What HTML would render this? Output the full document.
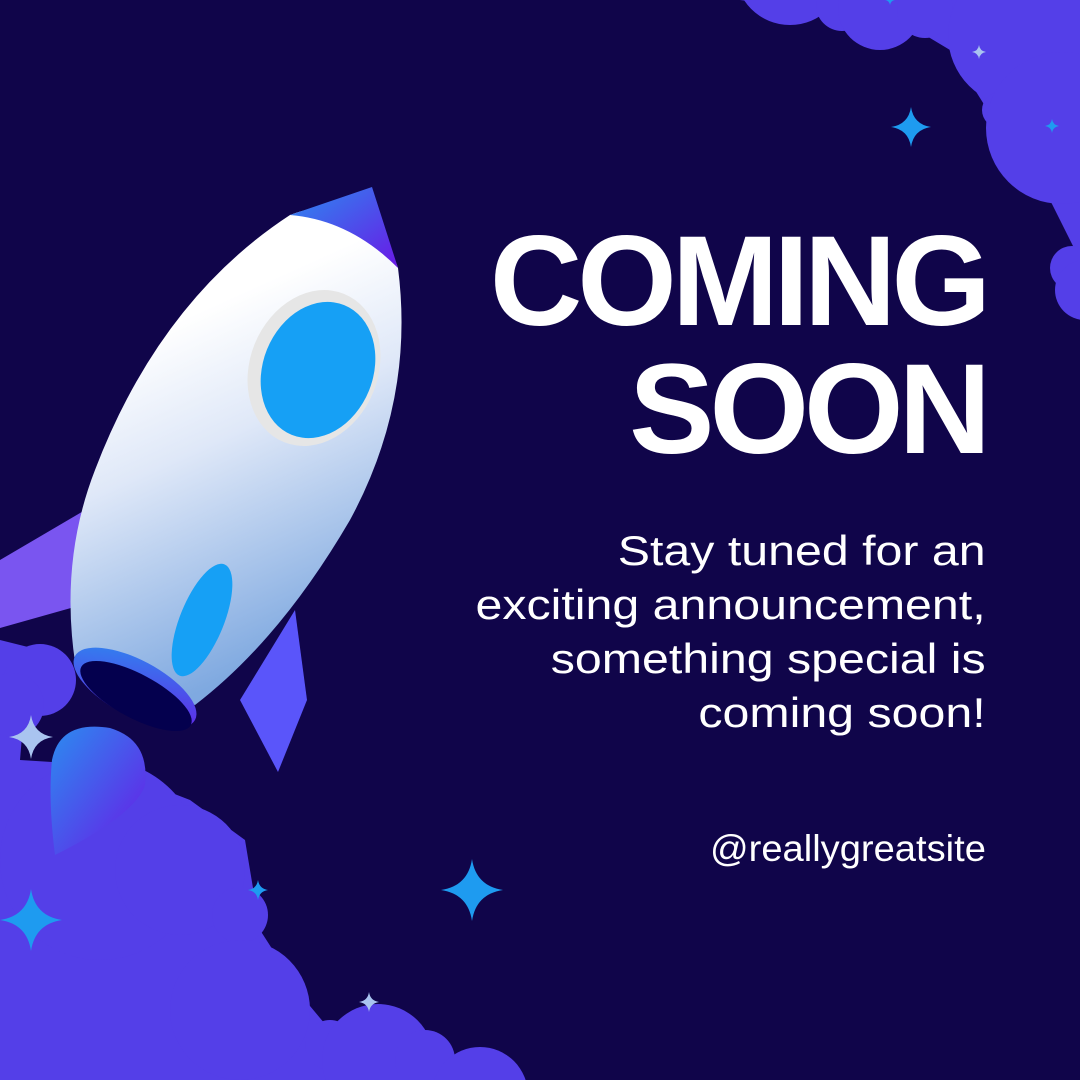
<!DOCTYPE html>
<html><head><meta charset="utf-8"><style>
html,body{margin:0;padding:0;background:#10054a;width:1080px;height:1080px;overflow:hidden;}
.w{position:relative;width:1080px;height:1080px;overflow:hidden;background:#10054a;}
svg{position:absolute;left:0;top:0;}
.t{position:absolute;right:94px;text-align:right;color:#fff;font-family:"Liberation Sans",sans-serif;white-space:nowrap;}
.h{font-weight:bold;font-size:128px;line-height:128px;letter-spacing:-5px;}
.p{font-size:42px;line-height:54px;transform:scaleX(1.15);transform-origin:right top;}
</style></head><body><div class="w">
<svg width="1080" height="1080" viewBox="0 0 1080 1080">
<defs>
<linearGradient id="bd" x1="0" y1="0" x2="0.3" y2="1"><stop offset="0.3" stop-color="#ffffff"/><stop offset="0.55" stop-color="#dfe8f8"/><stop offset="1" stop-color="#7fa9e0"/></linearGradient>
<linearGradient id="pb" x1="0" y1="0" x2="1" y2="1"><stop offset="0" stop-color="#2b8cf0"/><stop offset="1" stop-color="#6a18e6"/></linearGradient>
<path id="s" d="M0,-1 Q0.13,-0.13 1,0 Q0.13,0.13 0,1 Q-0.13,0.13 -1,0 Q-0.13,-0.13 0,-1Z"/>
</defs>
<g fill="#543fe8">
<path d="M0,640 L40,650 L25,700 L20,760 L100,765 L190,800 L245,840 L260,930 L305,1000 L330,1030 L350,1020 L440,1050 L520,1080 L0,1080Z"/>
<circle cx="40" cy="680" r="36"/><circle cx="12" cy="705" r="32"/>
<circle cx="100" cy="860" r="100"/><circle cx="180" cy="870" r="65"/>
<circle cx="240" cy="915" r="28"/><circle cx="240" cy="1010" r="70"/>
<circle cx="330" cy="1045" r="25"/><circle cx="378" cy="1060" r="56"/>
<circle cx="425" cy="1060" r="30"/><circle cx="480" cy="1095" r="48"/>
<path d="M740,0 L1080,0 L1080,320 L1075,250 L1050,200 L1000,130 L950,50 L900,20 Z"/>
<circle cx="790" cy="-30" r="55"/><circle cx="842" cy="5" r="26"/>
<circle cx="880" cy="8" r="42"/><circle cx="925" cy="10" r="28"/>
<circle cx="1020" cy="35" r="72"/><circle cx="1000" cy="110" r="18"/>
<circle cx="1062" cy="128" r="76"/><circle cx="1072" cy="268" r="22"/>
<circle cx="1085" cy="290" r="30"/>
</g>
<path d="M0,560 L92,506 Q106,530 98,560 L78,606 L0,628Z" fill="#7a55f0"/>
<path d="M240,700 L295,610 L307,700 L278,772Z" fill="#5a55fa"/>
<path d="M290,215 Q370,185 398,268 Q415,400 350,520 Q280,640 195,705 L75,662 Q60,560 95,470 Q160,300 290,215Z" fill="url(#bd)"/>
<path d="M290,215 L372,187 L398,268 Q350,220 290,215Z" fill="url(#pb)"/>
<ellipse cx="314" cy="368" rx="64" ry="80" transform="rotate(22 314 368)" fill="#e6e6e6"/>
<ellipse cx="318" cy="370" rx="55" ry="70" transform="rotate(22 318 370)" fill="#16a0f5"/>
<ellipse cx="202" cy="620" rx="22" ry="60" transform="rotate(22 202 620)" fill="#16a0f5"/>
<ellipse cx="135" cy="688" rx="68" ry="28" transform="rotate(28 135 688)" fill="url(#pb)"/>
<ellipse cx="136" cy="696" rx="62" ry="22" transform="rotate(28 136 696)" fill="#04004e"/>
<path d="M52,760 Q60,720 110,728 Q150,740 145,785 Q135,815 55,855 Q48,800 52,760Z" fill="url(#pb)"/>
<g fill="#1e9bf0">
<use href="#s" transform="translate(911,127) scale(20)"/>
<use href="#s" transform="translate(1052,126) scale(7)"/>
<use href="#s" transform="translate(472,890) scale(31)"/>
<use href="#s" transform="translate(31,920) scale(31)"/>
<use href="#s" transform="translate(258,890) scale(10)"/>
<use href="#s" transform="translate(890,0) scale(5)"/>
</g>
<g fill="#a9c4f0">
<use href="#s" transform="translate(979,52) scale(7)"/>
<use href="#s" transform="translate(369,1002) scale(10)"/>
<use href="#s" transform="translate(31,737) scale(22)"/>
</g>
</svg>
<div class="t h" style="top:218px;">COMING</div>
<div class="t h" style="top:346px;">SOON</div>
<div class="t p" style="top:524px;">Stay tuned for an<br>exciting announcement,<br>something special is<br>coming soon!</div>
<div class="t p" style="top:822px;font-size:37px;transform:scaleX(1.03);">@reallygreatsite</div>
</div></body></html>
